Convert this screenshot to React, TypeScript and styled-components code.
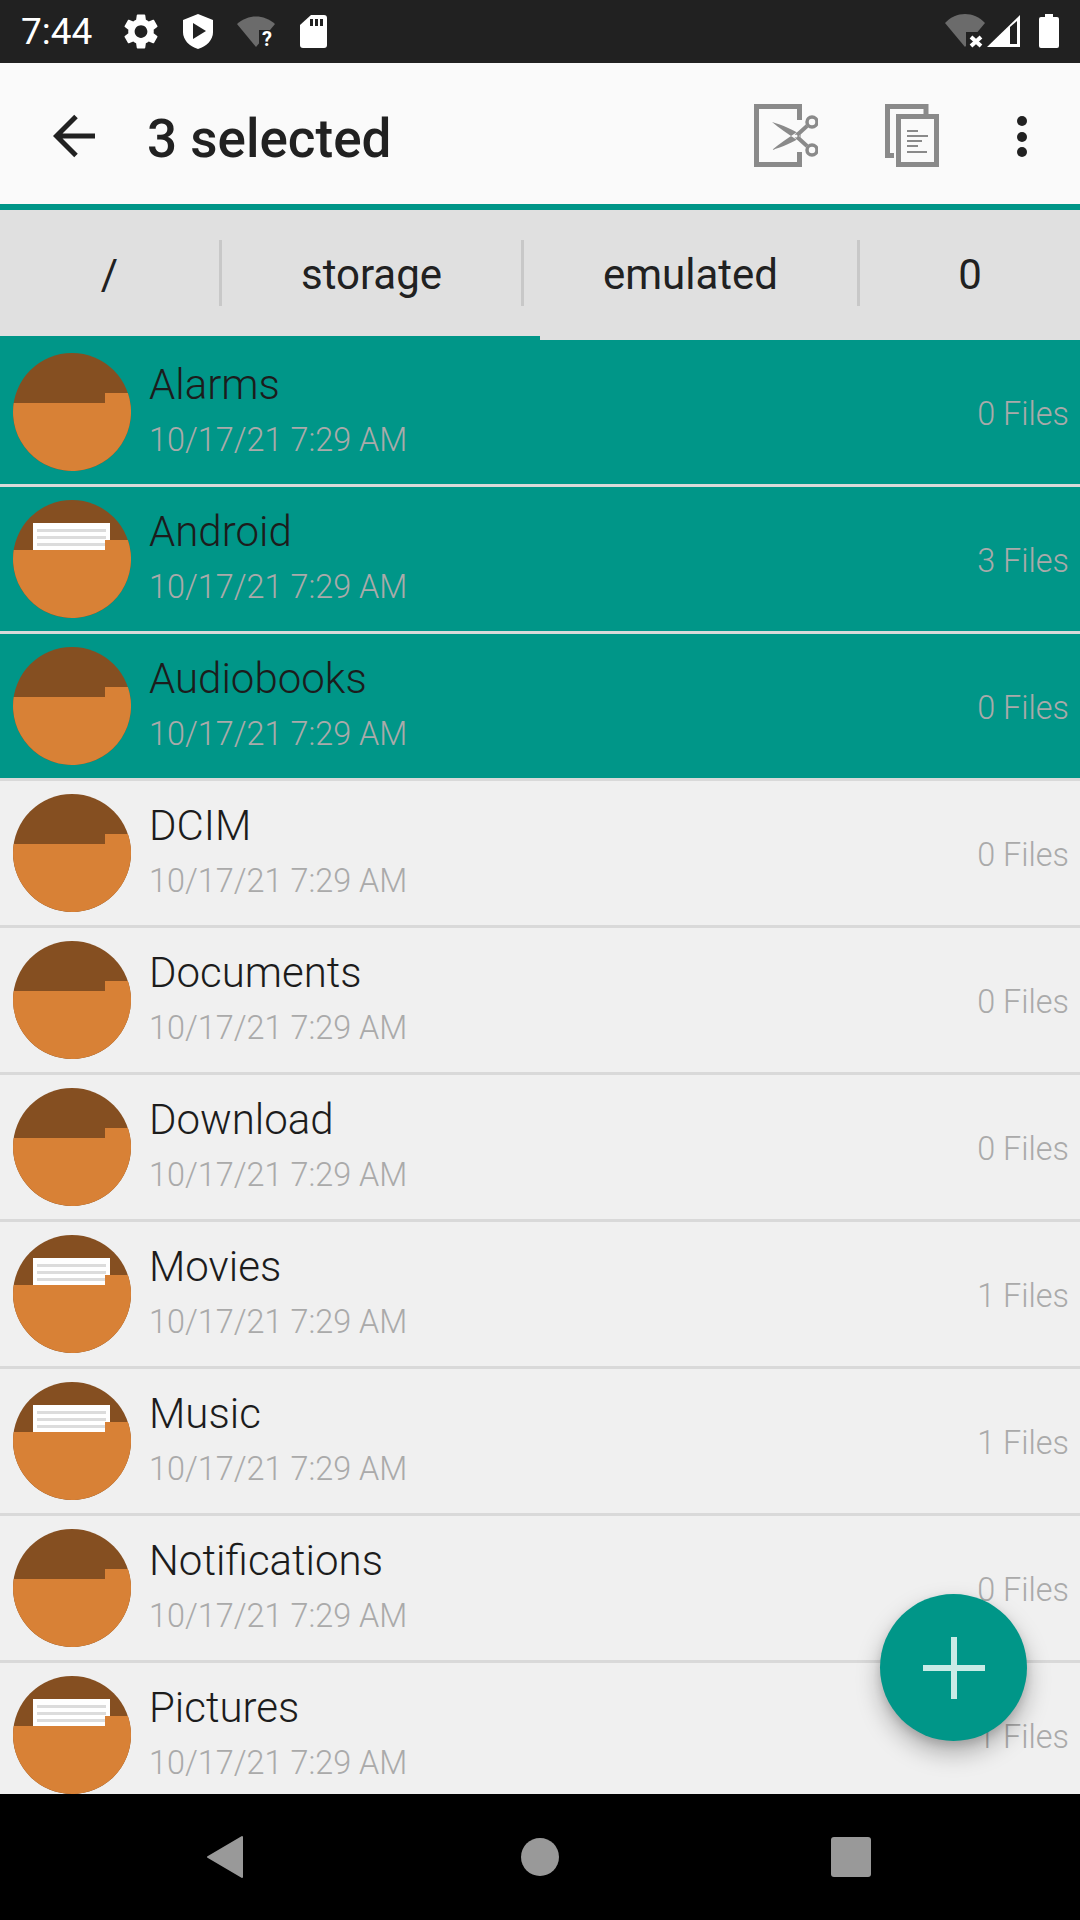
import React from 'react';
import styled, { createGlobalStyle } from 'styled-components';

const GlobalStyle = createGlobalStyle`
  html, body { margin: 0; padding: 0; background: #000; }
  * { box-sizing: border-box; }
`;

const teal = '#009688';

const Page = styled.div`
  position: relative;
  width: 1080px;
  height: 1920px;
  display: flex;
  flex-direction: column;
  overflow: hidden;
  font-family: Roboto, "Liberation Sans", sans-serif;
  background: #f0f0f0;
`;

const StatusBar = styled.div`
  flex: 0 0 63px;
  height: 63px;
  background: #212121;
  display: flex;
  align-items: center;
  justify-content: space-between;
  padding: 0 21px;
`;

const StatusGroup = styled.div`
  display: flex;
  align-items: center;
`;

const Clock = styled.span`
  color: #fff;
  font-size: 37px;
  font-weight: 400;
  width: 103px;
`;

const StatusIcon = styled.svg<{ $w: number; $after?: number }>`
  display: block;
  width: ${(p) => p.$w}px;
  height: 63px;
  margin-right: ${(p) => p.$after ?? 0}px;
`;

const Toolbar = styled.div`
  flex: 0 0 147px;
  height: 147px;
  background: #fafafa;
  border-bottom: 6px solid ${teal};
  display: flex;
  align-items: center;
  padding: 0 0 0 53px;
`;

const Title = styled.div`
  margin: 11px 0 0 52px;
  flex: 1;
  color: #212121;
  font-size: 53px;
  font-weight: 500;
`;

const ToolIcon = styled.svg<{ $w: number; $after: number }>`
  display: block;
  width: ${(p) => p.$w}px;
  height: 141px;
  margin-right: ${(p) => p.$after}px;
`;

const Crumbs = styled.div`
  flex: 0 0 130px;
  background: #e0e0e0;
  display: flex;
  flex-direction: column;
`;

const CrumbRow = styled.div`
  flex: 1;
  display: grid;
  grid-template-columns: 222px 302px 336px 220px;
`;

const Crumb = styled.div<{ $last?: boolean }>`
  height: 66px;
  margin-top: 30px;
  padding-top: 3px;
  display: flex;
  align-items: center;
  justify-content: center;
  font-size: 42px;
  color: #212121;
  border-right: ${(p) => (p.$last ? 'none' : '3px solid #c8c8c8')};
`;

const Indicator = styled.div`
  width: 540px;
  height: 4px;
  background: ${teal};
`;

const FileList = styled.div`
  flex: 1;
  overflow: hidden;
`;

const Row = styled.div<{ $selected?: boolean }>`
  height: 147px;
  display: flex;
  align-items: flex-start;
  padding: 13px 11px 0 13px;
  background: ${(p) => (p.$selected ? teal : '#f0f0f0')};
  border-bottom: 3px solid #d9d9d9;
`;

const FolderIcon = styled.svg`
  display: block;
  flex: 0 0 118px;
  width: 118px;
  height: 118px;
`;

const RowText = styled.div`
  flex: 1;
  margin-left: 18px;
  display: flex;
  flex-direction: column;
`;

const Name = styled.div`
  font-size: 42px;
  font-weight: 300;
  line-height: 48px;
  margin-top: 8px;
  color: #1c1c1c;
`;

const Modified = styled.div`
  font-size: 32.4px;
  font-weight: 300;
  line-height: 36px;
  margin-top: 13px;
  color: #aaaaaa;
`;

const Count = styled.div`
  font-size: 32.4px;
  font-weight: 300;
  line-height: 36px;
  margin-top: 43px;
  color: #aaaaaa;
`;

const Fab = styled.div`
  position: absolute;
  left: 880px;
  top: 1594px;
  width: 147px;
  height: 147px;
  border-radius: 50%;
  background: ${teal};
  box-shadow: 0 12px 24px rgba(0, 0, 0, 0.28), 0 4px 8px rgba(0, 0, 0, 0.12);
  display: flex;
  align-items: center;
  justify-content: center;
`;

const NavBar = styled.div`
  flex: 0 0 126px;
  height: 126px;
  background: #000;
  display: flex;
  align-items: center;
  padding-left: 207px;
`;

const NavIcon = styled.svg<{ $w: number; $after?: number }>`
  display: block;
  width: ${(p) => p.$w}px;
  height: 126px;
  margin-right: ${(p) => p.$after ?? 0}px;
`;

function Folder({ paper }: { paper: boolean }) {
  return (
    <FolderIcon viewBox="0 0 118 118">
      <circle cx="59" cy="59" r="59" fill="#854f21" />
      {paper && (
        <g>
          <rect x="20" y="23" width="77" height="27" fill="#fff" />
          <rect x="24" y="29" width="69" height="3" fill="#dcdcdc" />
          <rect x="24" y="36" width="69" height="3" fill="#dcdcdc" />
          <rect x="24" y="43" width="69" height="3" fill="#dcdcdc" />
        </g>
      )}
      <path d="M0.7 50 H92 V40 H114.900 A59 59 0 1 1 0.7 50 Z" fill="#d88136" />
    </FolderIcon>
  );
}

const files = [
  { name: 'Alarms', count: 0, selected: true },
  { name: 'Android', count: 3, selected: true },
  { name: 'Audiobooks', count: 0, selected: true },
  { name: 'DCIM', count: 0 },
  { name: 'Documents', count: 0 },
  { name: 'Download', count: 0 },
  { name: 'Movies', count: 1 },
  { name: 'Music', count: 1 },
  { name: 'Notifications', count: 0 },
  { name: 'Pictures', count: 1 },
];

export default function App() {
  return (
    <Page>
      <GlobalStyle />
      <StatusBar>
        <StatusGroup>
          <Clock>7:44</Clock>
          {/* settings */}
          <StatusIcon $w={34} $after={25} viewBox="2.4 -1.1 19.2 26.2" preserveAspectRatio="xMidYMid meet">
            <path
              fill="#fff"
              d="M19.14 12.94c.04-.3.06-.61.06-.94 0-.32-.02-.64-.07-.94l2.03-1.58c.18-.14.23-.41.12-.61l-1.92-3.32c-.12-.22-.37-.29-.59-.22l-2.39.96c-.5-.38-1.03-.7-1.62-.94l-.36-2.54c-.04-.24-.24-.41-.48-.41h-3.84c-.24 0-.43.17-.47.41l-.36 2.54c-.59.24-1.13.57-1.62.94l-2.39-.96c-.22-.08-.47 0-.59.22L2.74 8.87c-.12.21-.08.47.12.61l2.03 1.58c-.05.3-.09.63-.09.94s.02.64.07.94l-2.03 1.58c-.18.14-.23.41-.12.61l1.92 3.32c.12.22.37.29.59.22l2.39-.96c.5.38 1.03.7 1.62.94l.36 2.54c.05.24.24.41.48.41h3.84c.24 0 .44-.17.47-.41l.36-2.54c.59-.24 1.13-.56 1.62-.94l2.39.96c.22.08.47 0 .59-.22l1.92-3.32c.12-.22.07-.47-.12-.61l-2.01-1.58zM12 15.6c-1.98 0-3.6-1.62-3.6-3.6s1.62-3.6 3.6-3.6 3.6 1.62 3.6 3.6-1.62 3.6-3.6 3.6z"
            />
          </StatusIcon>
          {/* play protect */}
          <StatusIcon $w={30} $after={24} viewBox="0 0 30 63">
            <path fill="#fff" d="M15 14 L30 20 V32 C30 40 24 46 15 49 C6 46 0 40 0 32 V20 Z" />
            <path fill="#212121" d="M10 23 L23 31 L10 39 Z" />
          </StatusIcon>
          {/* wifi unknown */}
          <StatusIcon $w={38} $after={25} viewBox="0 0 38 63">
            <path fill="#6b6b6b" d="M0 24 C11 14 27 14 38 24 L19 47 Z" />
            <path fill="#212121" d="M22 30 h16 v18 h-16 Z" />
            <text x="30" y="46" fill="#fff" fontSize="20" fontWeight="700" textAnchor="middle">?</text>
          </StatusIcon>
          {/* sd card */}
          <StatusIcon $w={27} viewBox="0 0 27 63">
            <path fill="#fff" d="M11 15 H24 a3 3 0 0 1 3 3 V45 a3 3 0 0 1 -3 3 H3 a3 3 0 0 1 -3 -3 V25 Z" />
            <path fill="#212121" d="M10 19 h3 v7 h-3 Z M15 19 h3 v7 h-3 Z M20 19 h3 v7 h-3 Z" />
          </StatusIcon>
        </StatusGroup>
        <StatusGroup>
          {/* wifi off */}
          <StatusIcon $w={40} $after={2} viewBox="0 0 40 63">
            <path fill="#6b6b6b" d="M0 23 C11 11 29 11 40 23 L20 47 Z" />
            <path fill="#212121" d="M21 32 h19 v17 h-19 Z" />
            <path stroke="#fff" strokeWidth="4" d="M26 37 L36 46 M36 37 L26 46" />
          </StatusIcon>
          {/* signal */}
          <StatusIcon $w={33} $after={19} viewBox="0 0 33 63">
            <path fill="#fff" d="M33 15 V47 H0 Z" />
            <path fill="#212121" d="M23 27 L30 21 V44 H23 Z" />
          </StatusIcon>
          {/* battery */}
          <StatusIcon $w={20} viewBox="0 0 20 63">
            <path fill="#fff" d="M6 14 H14 V17 H18 a2 2 0 0 1 2 2 V46 a2 2 0 0 1 -2 2 H2 a2 2 0 0 1 -2 -2 V19 a2 2 0 0 1 2 -2 H6 Z" />
          </StatusIcon>
        </StatusGroup>
      </StatusBar>

      <Toolbar>
        <ToolIcon $w={42} $after={0} viewBox="0 0 42 141">
          <path fill="none" stroke="#212121" strokeWidth="5" d="M42 73 H4 M23 53.500 L3.500 73 L23 92.500" />
        </ToolIcon>
        <Title>3 selected</Title>
        {/* cut */}
        <ToolIcon $w={64} $after={67} viewBox="0 0 64 141">
          <path fill="none" stroke="#8a8a8a" strokeWidth="5" d="M45.500 57 V43.500 H2.500 V101.500 H45.500 V89" />
          <path fill="#8a8a8a" d="M18 59 C28 62 40 67 47 72 L43 77 C34 71 25 65 18 59 Z M18 87 C28 84 40 79 47 74 L43 69 C34 75 25 81 18 87 Z" />
          <path fill="none" stroke="#8a8a8a" strokeWidth="4" d="M42 73 L53 63 M42 73 L53 83" />
          <circle cx="58" cy="59" r="5" fill="none" stroke="#8a8a8a" strokeWidth="3.500" />
          <circle cx="58" cy="87" r="5" fill="none" stroke="#8a8a8a" strokeWidth="3.500" />
          <circle cx="42" cy="73" r="1.500" fill="#fafafa" />
        </ToolIcon>
        {/* copy */}
        <ToolIcon $w={54} $after={78} viewBox="0 0 54 141">
          <path fill="none" stroke="#8a8a8a" strokeWidth="5" d="M41 51 V43.500 H2.500 V92.500 H9" />
          <rect x="13.500" y="53.500" width="38" height="48" fill="#fafafa" stroke="#8a8a8a" strokeWidth="5" />
          <path stroke="#8a8a8a" strokeWidth="2" d="M22 68 H33 M22 73 H43 M22 78 H37 M22 83 H33 M22 89 H42" />
        </ToolIcon>
        {/* more */}
        <ToolIcon $w={10} $after={53} viewBox="0 0 10 141">
          <circle cx="5" cy="58" r="5" fill="#212121" />
          <circle cx="5" cy="74" r="5" fill="#212121" />
          <circle cx="5" cy="89" r="5" fill="#212121" />
        </ToolIcon>
      </Toolbar>

      <Crumbs>
        <CrumbRow>
          <Crumb>/</Crumb>
          <Crumb>storage</Crumb>
          <Crumb>emulated</Crumb>
          <Crumb $last>0</Crumb>
        </CrumbRow>
        <Indicator />
      </Crumbs>

      <FileList>
        {files.map((f) => (
          <Row key={f.name} $selected={f.selected}>
            <Folder paper={f.count > 0} />
            <RowText>
              <Name>{f.name}</Name>
              <Modified>10/17/21 7:29 AM</Modified>
            </RowText>
            <Count>{f.count} Files</Count>
          </Row>
        ))}
      </FileList>

      <Fab>
        <svg width="62" height="62" viewBox="0 0 62 62">
          <path fill="#c8ebe6" d="M28 0 h6 v28 h28 v6 h-28 v28 h-6 v-28 h-28 v-6 h28 Z" />
        </svg>
      </Fab>

      <NavBar>
        <NavIcon $w={36} $after={278} viewBox="0 0 36 126">
          <path fill="#999" stroke="#999" strokeWidth="2" strokeLinejoin="round" d="M35 43 V83 L1 63 Z" />
        </NavIcon>
        <NavIcon $w={38} $after={272} viewBox="0 0 38 126">
          <circle cx="19" cy="63" r="19" fill="#999" />
        </NavIcon>
        <NavIcon $w={40} viewBox="0 0 40 126">
          <rect x="0" y="43" width="40" height="40" rx="3" fill="#999" />
        </NavIcon>
      </NavBar>
    </Page>
  );
}
